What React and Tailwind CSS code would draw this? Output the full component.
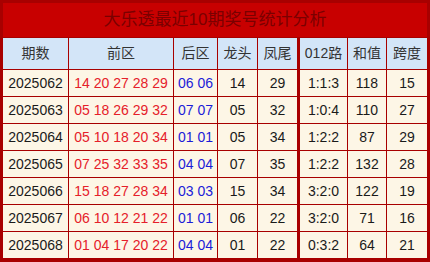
import React from 'react';

const heads = ['期数', '前区', '后区', '龙头', '凤尾', '012路', '和值', '跨度'];

const rows = [
    ['2025062', '14 20 27 28 29', '06 06', '14', '29', '1:1:3', '118', '15'],
    ['2025063', '05 18 26 29 32', '07 07', '05', '32', '1:0:4', '110', '27'],
    ['2025064', '05 10 18 20 34', '01 01', '05', '34', '1:2:2', '87', '29'],
    ['2025065', '07 25 32 33 35', '04 04', '07', '35', '1:2:2', '132', '28'],
    ['2025066', '15 18 27 28 34', '03 03', '15', '34', '3:2:0', '122', '19'],
    ['2025067', '06 10 12 21 22', '01 01', '06', '22', '3:2:0', '71', '16'],
    ['2025068', '01 04 17 20 22', '04 04', '01', '22', '0:3:2', '64', '21'],
];

function cellColor(i) {
    if (i === 1) return 'text-[#e5202a]';
    if (i === 2) return 'text-[#1c1cd8]';
    return 'text-[#1a1a1a]';
}

export default function App() {
    return (
        <div
            className="w-[430px] h-[262px] bg-[#a80000] border-x-[3px] border-t-[3px] border-b-4 border-[#a80000] flex flex-col gap-px"
            style={{ fontFamily: '"Liberation Sans", "Noto Sans CJK SC", sans-serif' }}
        >
            <div className="h-[34px] bg-[#c80000] flex items-center justify-center text-[17px] text-[#7a0000]">
                大乐透最近10期奖号统计分析
            </div>
            <div className="grid grid-cols-[65px_104px_43px_39px_39px_49px_38px_40px] grid-rows-[31px_repeat(7,26px)] gap-px">
                {heads.map((h, i) => (
                    <div
                        key={h}
                        className={`bg-[#d3e5f8] flex items-center justify-center text-[14px] text-[#333] ${i === 5 ? 'ml-[2px]' : ''}`}
                    >
                        {h}
                    </div>
                ))}
                {rows.map((r) =>
                    r.map((v, i) => (
                        <div
                            key={r[0] + i}
                            className={`bg-[#fdf6e6] flex items-center justify-center text-[14px] ${cellColor(i)} ${i === 5 ? 'ml-[2px]' : ''}`}
                        >
                            {v}
                        </div>
                    ))
                )}
            </div>
        </div>
    );
}
